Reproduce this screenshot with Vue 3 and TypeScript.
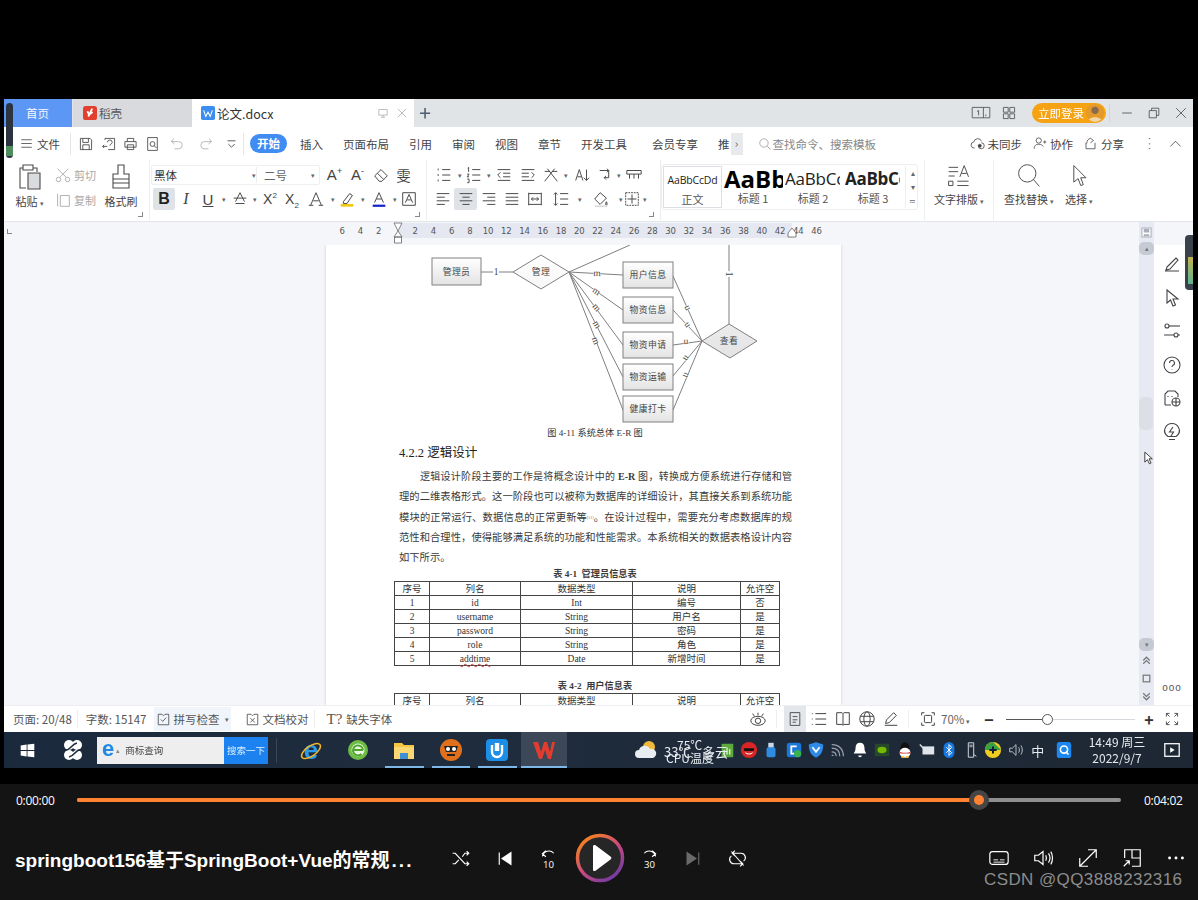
<template>
  <div class="stage">
    <div class="top-gap"></div>

    <div class="window">
      <div class="left-handle"><i></i></div>
      <div class="right-handle"><i></i></div>

      <div class="tabs">
        <div class="tab tab-home">首页</div>
        <div class="tab tab-grey">
          <svg class="tab-logo" viewBox="0 0 16 16"><rect width="16" height="16" rx="3" fill="#e2402f" /><path d="M10.5 3 6 12M5 6l2 4 4-3" fill="none" stroke="#fff" stroke-width="2" /></svg>
          稻壳
        </div>
        <div class="tab tab-doc">
          <svg class="tab-logo" viewBox="0 0 16 16"><rect width="16" height="16" rx="2" fill="#3b8ef0" /><path d="M3 5l2.5 7L8 7l2.500 5L13 5" fill="none" stroke="#fff" stroke-width="1.200" /></svg>
          <span class="tab-name">论文.docx</span>
          <svg class="ic14" viewBox="0 0 20 20" v-html="ic.screen"></svg>
          <svg class="ic14" viewBox="0 0 20 20" v-html="ic.close"></svg>
        </div>
        <div class="tab-plus">+</div>
        <div class="grow"></div>
        <svg class="win-ic wide" viewBox="0 0 24 20" v-html="ic.book1"></svg>
        <svg class="win-ic" viewBox="0 0 20 20" v-html="ic.grid"></svg>
        <div class="login">立即登录<span class="avatar"><svg viewBox="0 0 20 20"><circle cx="10" cy="7" r="4" fill="#8a6a4c" /><path d="M2 20c1-7 15-7 16 0z" fill="#f3d6a8" /></svg></span></div>
        <span class="tsep"></span>
        <svg class="win-ic" viewBox="0 0 20 20" v-html="ic.min"></svg>
        <svg class="win-ic" viewBox="0 0 20 20" v-html="ic.restore"></svg>
        <svg class="win-ic last" viewBox="0 0 20 20" v-html="ic.close"></svg>
      </div>

      <div class="menubar">
        <svg class="ic15 menu-ic" viewBox="0 0 20 20" v-html="ic.menu"></svg>
        <span class="file">文件</span>
        <span class="vsep"></span>
        <div class="quick">
          <svg v-for="q in quick" :key="q.n" class="ic17" :class="{ faint: q.faint }" viewBox="0 0 20 20" :style="{ width: q.w + 'px' }" v-html="ic[q.n]"></svg>
        </div>
        <span class="vsep tight"></span>
        <div class="pill">开始</div>
        <div class="menu-items">
          <span v-for="m in menus" :key="m">{{ m }}</span>
        </div>
        <div class="more-tab">›</div>
        <div class="search">
          <svg class="ic14" viewBox="0 0 20 20" v-html="ic.search"></svg>
          查找命令、搜索模板
        </div>
        <div class="grow"></div>
        <div class="menu-right">
          <span><svg class="ic15" viewBox="0 0 20 20" v-html="ic.cloud"></svg>未同步</span>
          <span><svg class="ic15" viewBox="0 0 20 20" v-html="ic.user"></svg>协作</span>
          <span><svg class="ic15" viewBox="0 0 20 20" v-html="ic.share"></svg>分享</span>
          <svg class="ic15 kebab" viewBox="0 0 20 20" v-html="ic.kebab"></svg>
          <svg class="ic15 chev" viewBox="0 0 20 20" v-html="ic.up"></svg>
        </div>
      </div>

      <div class="ribbon">
        <div class="group g-clip">
          <div class="big paste">
            <svg class="ic30" viewBox="0 0 30 30" v-html="ic.paste"></svg>
            <span>粘贴<em>▾</em></span>
          </div>
          <div class="small-col">
            <div class="faint-row"><svg class="ic17 faint" viewBox="0 0 20 20" v-html="ic.cut"></svg>剪切</div>
            <div class="faint-row"><svg class="ic17 faint" viewBox="0 0 20 20" v-html="ic.copy"></svg>复制</div>
          </div>
          <div class="big brush">
            <svg class="ic30" viewBox="0 0 30 30" v-html="ic.brush"></svg>
            <span>格式刷</span>
          </div>
          <span class="corner"></span>
        </div>

        <div class="group g-font">
          <div class="tool-row">
            <div class="font-box">
              <span class="fname">黑体</span><em>▾</em>
              <span class="fsize">二号</span><em>▾</em>
            </div>
            <template v-for="(c, i) in fontTop" :key="i">
              <div class="cell" :style="{ width: c.w + 'px' }">
                <svg v-if="c.n" class="ic17" viewBox="0 0 20 20" v-html="ic[c.n]"></svg>
                <span v-else :class="c.cls">{{ c.t }}<sup v-if="c.s">{{ c.s }}</sup></span>
              </div>
            </template>
          </div>
          <div class="tool-row second">
            <div v-for="(c, i) in fontBottom" :key="i" class="cell" :class="{ on: c.on }" :style="{ width: c.w + 'px' }">
              <svg v-if="c.n" class="ic17" viewBox="0 0 20 20" v-html="ic[c.n]"></svg>
              <span v-else :class="c.cls">{{ c.t }}<sup v-if="c.s">{{ c.s }}</sup><sub v-if="c.b">{{ c.b }}</sub></span>
            </div>
          </div>
          <span class="corner"></span>
        </div>

        <div class="group g-para">
          <div class="tool-row">
            <div v-for="(c, i) in paraTop" :key="i" class="cell" :style="{ width: c.w + 'px' }">
              <svg v-if="c.n" class="ic17" viewBox="0 0 20 20" v-html="ic[c.n]"></svg>
              <span v-else class="dd">▾</span>
            </div>
          </div>
          <div class="tool-row second">
            <div v-for="(c, i) in paraBottom" :key="i" class="cell" :class="{ on: c.on }" :style="{ width: c.w + 'px' }">
              <svg v-if="c.n" class="ic17" viewBox="0 0 20 20" v-html="ic[c.n]"></svg>
              <span v-else class="dd">▾</span>
            </div>
          </div>
          <span class="corner"></span>
        </div>

        <div class="styles">
          <div v-for="s in styles" :key="s.label" class="style-card" :class="{ lead: s.lead }">
            <div class="sample" :class="s.cls">{{ s.text }}</div>
            <div class="slabel">{{ s.label }}</div>
          </div>
          <div class="style-scroll">
            <span>▴</span><span>▾</span><span>≂</span>
          </div>
        </div>

        <div class="big-tool t-layout">
          <svg class="ic26" viewBox="0 0 30 30" v-html="ic.textlayout"></svg>
          <span>文字排版<em>▾</em></span>
        </div>
        <div class="big-tool t-find">
          <svg class="ic26" viewBox="0 0 30 30" v-html="ic.find"></svg>
          <span>查找替换<em>▾</em></span>
        </div>
        <div class="big-tool t-select">
          <svg class="ic26" viewBox="0 0 30 30" v-html="ic.select"></svg>
          <span>选择<em>▾</em></span>
        </div>
      </div>

      <div class="ruler">
        <span class="ruler-corner"></span>
        <div class="ruler-track">
          <span v-for="(n, i) in rulerNums" :key="i" class="tick">{{ n }}</span>
          <svg class="hourglass" viewBox="0 0 10 22"><path d="M1 1h8L5 9zM5 9l4 6H1zM1.500 15h7v6h-7z" fill="#fff" stroke="#666" stroke-width=".8" /></svg>
          <svg class="marker" viewBox="0 0 10 12"><path d="M5 1l4 5v4H1V6z" fill="#fff" stroke="#666" stroke-width=".8" /></svg>
        </div>
      </div>

      <div class="workspace">
        <div class="doc">
          <div class="page">
            <svg class="er" viewBox="0 0 515 192">
              <defs>
                <linearGradient id="boxFill" x1="0" y1="0" x2="0" y2="1">
                  <stop offset="0" stop-color="#fff" />
                  <stop offset="1" stop-color="#e3e3e3" />
                </linearGradient>
              </defs>
              <g stroke="#7f7f7f" stroke-width="1" fill="none">
                <path d="M155 27h32M243 27l61-27M403 0v79" />
                <path v-for="(l, i) in erLeft" :key="'l' + i" :d="`M243 27L297 ${l.y}`" />
                <path v-for="(l, i) in erLeft" :key="'r' + i" :d="`M347 ${l.ry}L376 96`" />
              </g>
              <g stroke="none" fill="#fff">
                <circle v-for="(l, i) in erLeft" :key="'cm' + i" :cx="l.mx" :cy="l.my - 2" r="3.500" />
                <circle v-for="(l, i) in erLeft" :key="'cu' + i" :cx="l.ux" :cy="l.uy - 2" r="2.500" />
                <circle cx="170" cy="27" r="3" />
                <circle cx="403" cy="29" r="3" />
              </g>
              <g class="er-label">
                <text v-for="(l, i) in erLeft" :key="'m' + i" :x="l.mx" :y="l.my" text-anchor="middle" :transform="`rotate(${l.ma} ${l.mx} ${l.my - 2})`">m</text>
                <text v-for="(l, i) in erLeft" :key="'u' + i" :x="l.ux" :y="l.uy" text-anchor="middle" :transform="`rotate(${l.ua} ${l.ux} ${l.uy - 2})`">u</text>
                <text x="170" y="30" text-anchor="middle">1</text>
                <text x="403" y="32" text-anchor="middle" transform="rotate(90 403 29)">1</text>
              </g>
              <g fill="url(#boxFill)" stroke="#808080" stroke-width="1">
                <rect x="106" y="13" width="49" height="27" />
                <rect v-for="b in erBoxes" :key="b.t" x="297" :y="b.y" width="50" height="26" />
                <path d="M187 27l28-17 28 17-28 17zM376 96l27-17 28 17-27 17z" />
              </g>
              <g class="er-text">
                <text x="130.500" y="30" text-anchor="middle">管理员</text>
                <text x="215" y="30" text-anchor="middle">管理</text>
                <text v-for="b in erBoxes" :key="b.t" x="322" :y="b.y + 16" text-anchor="middle">{{ b.t }}</text>
                <text x="403" y="99" text-anchor="middle">查看</text>
              </g>
            </svg>
            <div class="cap fig">图 4-11 系统总体 E-R 图</div>
            <h3 class="h-sec">4.2.2 逻辑设计</h3>
            <div class="para">
              <div class="ln indent">逻辑设计阶段主要的工作是将概念设计中的 <b>E-R</b> 图，转换成方便系统进行存储和管</div>
              <div class="ln">理的二维表格形式。这一阶段也可以被称为数据库的详细设计，其直接关系到系统功能</div>
              <div class="ln">模块的正常运行、数据信息的正常更新等<span class="ref">[11]</span>。在设计过程中，需要充分考虑数据库的规</div>
              <div class="ln">范性和合理性，使得能够满足系统的功能和性能需求。本系统相关的数据表格设计内容</div>
              <div class="ln last">如下所示。</div>
            </div>
            <div class="cap tcap">表 4-1&nbsp; 管理员信息表</div>
            <table class="tbl">
              <colgroup><col class="c1" /><col class="c2" /><col class="c3" /><col class="c4" /><col class="c5" /></colgroup>
              <tr><td v-for="h in tableHead" :key="h">{{ h }}</td></tr>
              <tr v-for="r in tableRows" :key="r[0]">
                <td v-for="(v, i) in r" :key="i"><span :class="{ wavy: v === 'addtime' }">{{ v }}</span></td>
              </tr>
            </table>
            <div class="cap tcap second-cap">表 4-2&nbsp; 用户信息表</div>
            <table class="tbl">
              <colgroup><col class="c1" /><col class="c2" /><col class="c3" /><col class="c4" /><col class="c5" /></colgroup>
              <tr><td v-for="h in tableHead" :key="h">{{ h }}</td></tr>
            </table>
          </div>
        </div>

        <div class="vscroll">
          <svg class="sb-top" viewBox="0 0 12 12"><path d="M1 1h10v10H1z" fill="#fff" stroke="#a9aeb8" /><path d="M3 2h6v4H3zM3 8h6v2H3z" fill="#a9aeb8" stroke="none" /></svg>
          <div class="sb-btn">▴</div>
          <div class="sb-rail"><div class="sb-thumb"></div></div>
          <div class="sb-btn">▾</div>
          <div class="sb-foot">
            <svg viewBox="0 0 10 10"><path d="M2 5l3-3 3 3M2 8l3-3 3 3" fill="none" stroke="#777" /></svg>
            <svg viewBox="0 0 10 10"><rect x="2" y="2" width="6" height="6" fill="none" stroke="#777" /></svg>
            <svg viewBox="0 0 10 10"><path d="M2 2l3 3 3-3M2 5l3 3 3-3" fill="none" stroke="#777" /></svg>
          </div>
          <svg class="mouse" viewBox="0 0 12 16"><path d="M1 1v12l3-3 2.500 5 2-1-2.500-5h4z" fill="#fff" stroke="#222" stroke-width="1" /></svg>
        </div>

        <div class="side">
          <div class="side-grip"></div>
          <svg v-for="n in sideIcons" :key="n" class="side-ic" viewBox="0 0 20 20" v-html="ic[n]"></svg>
          <div class="grow"></div>
          <div class="side-dots">ooo</div>
        </div>
      </div>

      <div class="status">
        <span class="st-text page-no">页面: 20/48</span>
        <span class="st-sep"></span>
        <span class="st-text words">字数: 15147</span>
        <span class="st-btn spell"><svg class="ic15" viewBox="0 0 20 20" v-html="ic.spell"></svg>拼写检查<em>▾</em></span>
        <span class="st-btn proof"><svg class="ic15" viewBox="0 0 20 20" v-html="ic.proof"></svg>文档校对</span>
        <span class="st-sep"></span>
        <span class="st-btn missing"><b>T?</b>缺失字体</span>
        <div class="grow"></div>
        <svg class="st-ic eye" viewBox="0 0 20 20" v-html="ic.eye"></svg>
        <span class="st-sep"></span>
        <div class="view-on"><svg class="st-ic" viewBox="0 0 20 20" v-html="ic.page"></svg></div>
        <svg class="st-ic" viewBox="0 0 20 20" v-html="ic.outline"></svg>
        <svg class="st-ic" viewBox="0 0 20 20" v-html="ic.bookv"></svg>
        <svg class="st-ic" viewBox="0 0 20 20" v-html="ic.globe"></svg>
        <svg class="st-ic" viewBox="0 0 20 20" v-html="ic.pen"></svg>
        <span class="st-sep"></span>
        <svg class="st-ic" viewBox="0 0 20 20" v-html="ic.focus"></svg>
        <span class="zoom-val">70%<em>▾</em></span>
        <span class="zoom-btn">−</span>
        <div class="slider"><i></i><b></b></div>
        <span class="zoom-btn plus">+</span>
        <svg class="st-ic full" viewBox="0 0 20 20" v-html="ic.full"></svg>
      </div>
    </div>

    <div class="taskbar">
      <div class="tb-cell win"><svg viewBox="0 0 20 20"><path d="M2 4l7-1v6.500H2zM10 3l8-1v7.500h-8zM2 10.500h7V17l-7-1zM10 10.500h8V18l-8-1z" fill="#fff" /></svg></div>
      <div class="tb-cell win"><svg viewBox="0 0 24 24"><g fill="#fff"><circle cx="8" cy="7" r="5" /><circle cx="16" cy="7" r="5" /><circle cx="8" cy="17" r="5" /><circle cx="16" cy="17" r="5" /></g><path d="M3 12c6 2 7-6 13-7M21 12c-6-2-7 6-13 7" stroke="#1d2a3a" stroke-width="1.500" fill="none" /></svg></div>
      <div class="tb-search">
        <div class="tb-input"><span class="ie">e</span><em>▴</em>商标查询</div>
        <div class="tb-go">搜索一下</div>
      </div>
      <span class="tb-sep"></span>
      <div v-for="(a, i) in taskApps" :key="a.id" class="tb-app" :class="{ active: i === 5, run: i > 1 }">
        <svg viewBox="0 0 24 24" v-html="a.svg"></svg>
      </div>
      <div class="weather">
        <svg class="cloud" viewBox="0 0 24 20"><circle cx="15" cy="7" r="6" fill="#f0b93a" /><path d="M5 18a4 4 0 0 1 0-8 6 6 0 0 1 11-1 4.500 4.500 0 0 1 3 9z" fill="#e8edf2" /></svg>
        <span class="w1">33℃</span>
        <span class="w2">多云</span>
        <span class="w3">75℃</span>
        <span class="w4">CPU温度</span>
      </div>
      <div v-for="t in tray" :key="t.id" class="tray-cell" :class="{ q: t.id === 'p' }">
        <svg v-if="t.svg" viewBox="0 0 20 20" v-html="t.svg"></svg>
        <span v-else>{{ t.text }}</span>
      </div>
      <div class="clock">
        <div>14:49 周三</div>
        <div>2022/9/7</div>
      </div>
      <div class="action"><svg viewBox="0 0 20 20"><rect x="2" y="3" width="16" height="14" fill="none" stroke="#fff" stroke-width="1.400" /><path d="M8 7l5 3-5 3z" fill="#fff" /></svg></div>
    </div>

    <div class="black-gap"></div>

    <div class="player">
      <div class="progress-row">
        <span class="time t-start">0:00:00</span>
        <div class="track">
          <div class="done" :style="{ width: progress + '%' }"></div>
          <div class="knob"><i></i></div>
        </div>
        <span class="time t-end">0:04:02</span>
      </div>
      <div class="control-row">
        <div class="title">springboot156基于SpringBoot+Vue的常规<span class="dots">...</span></div>
        <div class="controls">
          <svg class="pc shuffle" viewBox="0 0 24 24"><path d="M3 6h3l11 12h4M3 18h3l4-4.500M14 10l3-4h4M19 3.500 21.500 6 19 8.500M19 15.500l2.500 2.500-2.500 2.500" /></svg>
          <svg class="pc prev" viewBox="0 0 24 24"><path d="M6 5v14" /><path d="M20 4v16L8 12z" class="solid" /></svg>
          <svg class="pc rew" viewBox="0 0 24 24"><path d="M5 9.500A7.500 7.500 0 0 1 18 6M9 3 5 6.500 9 10" /><text x="12" y="23" text-anchor="middle">10</text></svg>
          <svg class="play" viewBox="0 0 52 52">
            <defs>
              <linearGradient id="ring" x1=".1" y1=".1" x2=".8" y2="1">
                <stop offset="0" stop-color="#f6821f" />
                <stop offset=".5" stop-color="#cb4a7e" />
                <stop offset="1" stop-color="#6f3aa6" />
              </linearGradient>
            </defs>
            <circle cx="26" cy="26" r="22.500" fill="#262626" stroke="url(#ring)" stroke-width="3.500" />
            <path d="M19 14.500c0-1.500 1.200-2 2.500-1.300l15 11.300c1.200.9 1.200 2.100 0 3l-15 11.300c-1.300.7-2.500.2-2.500-1.300z" fill="#fff" />
          </svg>
          <svg class="pc fwd" viewBox="0 0 24 24"><path d="M19 9.500A7.500 7.500 0 0 0 6 6M15 3l4 3.500L15 10" /><text x="12" y="23" text-anchor="middle">30</text></svg>
          <svg class="pc next" viewBox="0 0 24 24"><path d="M4 4v16l12-8z" class="solid dim" /><path d="M18 5v14" class="dimline" /></svg>
          <svg class="pc repeat" viewBox="0 0 24 24"><path d="M7 6h9a5 5 0 0 1 3 9M17 18H8a5 5 0 0 1-3-9M9 3 6 6l3 3M15 21l3-3-3-3M5 4l14 16" /></svg>
        </div>
        <div class="controls-right">
          <svg class="pc" viewBox="0 0 24 24"><rect x="2" y="5" width="20" height="14" rx="3" /><path d="M6 14h5M13 14h5M6 16.500h12" stroke-width="1" /></svg>
          <svg class="pc" viewBox="0 0 24 24"><path d="M3 9h4l5-4v14l-5-4H3zM15 9c1 2 1 4 0 6M18 7c2 3 2 7 0 10M20.500 5c2.500 4 2.500 10 0 14" /></svg>
          <svg class="pc" viewBox="0 0 24 24"><path d="M3 21 21 3M12 3h9v9M3 12v9h9" /></svg>
          <svg class="pc" viewBox="0 0 24 24"><path d="M4 12V3h17v18h-9M12 3v9h9M3 21l6-6M5 15h4v4" /></svg>
          <svg class="pc" viewBox="0 0 24 24"><g class="solid"><circle cx="5" cy="12" r="1.600" /><circle cx="12" cy="12" r="1.600" /><circle cx="19" cy="12" r="1.600" /></g></svg>
        </div>
      </div>
      <div class="watermark">CSDN @QQ3888232316</div>
    </div>
  </div>
</template>

<script setup lang="ts">
interface Cell {
  w: number
  n?: string
  t?: string
  s?: string
  b?: string
  cls?: string
  on?: boolean
}

const progress = 86.3

const ic: Record<string, string> = {
  menu: '<path d="M3 5h14M3 10h14M3 15h14"/>',
  close: '<path d="M4 4l12 12M16 4 4 16"/>',
  screen: '<path d="M4 5h12v8H4zM10 13v3M7 16h6"/>',
  book1: '<path d="M1 3h22v13H1zM15 3v13M18 12v2M9 7v6M7 8l2-1"/>',
  grid: '<path d="M3 3h6v6H3zM11 3h6v6h-6zM3 11h6v6H3zM11 11h6v6h-6z"/>',
  min: '<path d="M4 10h12"/>',
  restore: '<path d="M4 7h9v9H4zM7 7V4h9v9h-3"/>',
  save: '<path d="M3 3h12l2 2v12H3zM6 3v5h7V3M6 17v-6h8v6"/>',
  saveas: '<path d="M5 5V3h12v14H9M8 8a3 3 0 0 1 6 0c0 2-3 2-3 4M4 11l-2 2 2 2M2 13h6"/>',
  print: '<path d="M6 7V3h8v4M3 7h14v7H3zM6 11h8v6H6z"/>',
  preview: '<path d="M4 2h12v16H4z"/><circle cx="10" cy="10" r="3"/><path d="M12 12l3 3"/>',
  undo: '<path d="M6 3 3 7l4 3M3 7h9a4.500 4.500 0 0 1 0 9H7"/>',
  redo: '<path d="M14 3l3 4-4 3M17 7H8a4.500 4.500 0 0 0 0 9h5"/>',
  ddown: '<path d="M5 6h10M6 10l4 4 4-4"/>',
  search: '<circle cx="8.500" cy="8.500" r="6"/><path d="M13 13l5 5"/>',
  cloud: '<path d="M6 16a4 4 0 0 1-1-8 5.500 5.500 0 0 1 10.500-1M15 9a4 4 0 1 1-4 4"/><circle cx="13" cy="13" r="2" fill="#444"/>',
  user: '<circle cx="9" cy="6" r="3.500"/><path d="M3 17c0-5 3-6 6-6s5 1 6 3M15 8h4M17 6v4"/>',
  share: '<path d="M4 9v8h12V9M10 3c-3 1-5 3-5 7M10 3l4 3-4 3"/>',
  kebab: '<path d="M10 3v1M10 10v1M10 16v1" stroke-width="2"/>',
  up: '<path d="M3 14l7-7 7 7"/>',
  paste: '<path d="M8 6H5v20h6M8 3h10v5H8zM18 6h4v4"/><path d="M13 11h12v16H13z" fill="#d9dbdf"/>',
  cut: '<circle cx="5" cy="15" r="2.500"/><circle cx="15" cy="15" r="2.500"/><path d="M6 13 16 3M14 13 4 3"/>',
  copy: '<path d="M7 5h10v12H7zM4 3v14" />',
  brush: '<path d="M12 3h6v9h5v5H7v-5h5zM7 17v9h16v-9M7 21h16"/>',
  eraser: '<path d="M3 11l7-7 7 7-6 6H8z"/><path d="M6 8l7 7"/>',
  hilite: '<path d="M6 13l7-9 3 2-6 9H6z"/><path d="M3 17h14" stroke="#f2c811" stroke-width="3"/>',
  acolor: '<path d="M5 14 10 3l5 11M7 10h6"/><path d="M3 17.500h14" stroke="#1726c8" stroke-width="2.500"/>',
  underA: '<path d="M5 13 10 3l5 10M3 9h14M5 15h10"/>',
  effect: '<path d="M4 17 10 3l6 14M7 12h6M2 17h5M13 17h5"/>',
  boxa: '<path d="M3 3h14v14H3zM6 14l4-9 4 9M8 11h4"/>',
  bullets: '<path d="M8 4h9M8 10h9M8 16h9"/><path d="M3 4h1M3 10h1M3 16h1" stroke-width="2.200"/>',
  numbers: '<path d="M8 4h9M8 10h9M8 16h9M3 2.500l1-1v5M2.500 9h2l-2 3h2M2.500 14.500h2v4h-2"/>',
  outdent: '<path d="M3 4h14M9 8h8M9 12h8M3 16h14M6 7l-3 3 3 3"/>',
  indent: '<path d="M3 4h14M3 8h8M3 12h8M3 16h14M14 7l3 3-3 3"/>',
  tools: '<path d="M3 17 14 3M17 17 6 3M3 6h6M11 6h6"/>',
  sortaz: '<path d="M3 16 7 4l4 12M5 12h4M15 4v12M12 13l3 3 3-3"/>',
  swap: '<path d="M3 5h10v8H8M11 3l2 2-2 2M10 11l-2 2 2 2"/>',
  rulerx: '<path d="M2 5h16v4H2zM5 9v5M10 9v5M15 9v5"/>',
  left: '<path d="M3 4h14M3 8h9M3 12h14M3 16h9"/>',
  center: '<path d="M3 4h14M6 8h8M3 12h14M6 16h8"/>',
  right: '<path d="M3 4h14M8 8h9M3 12h14M8 16h9"/>',
  just: '<path d="M3 4h14M3 8h14M3 12h14M3 16h14"/>',
  dist: '<path d="M3 3v14M17 3v14M3 4h14M3 16h14M6 10h8M8 8l-2 2 2 2M12 8l2 2-2 2"/>',
  spacing: '<path d="M9 4h9M9 10h9M9 16h9M4 3v14M2 5l2-2 2 2M2 15l2 2 2-2"/>',
  shade: '<path d="M9 3 3 10l6 6 7-7zM16 13c-1 2-1 4 0 4s1-2 0-4"/><path d="M3 18h14" stroke="#ddd" stroke-width="2"/>',
  table: '<path d="M3 3h14v14H3z" stroke-dasharray="2 1"/><path d="M10 5v10M5 10h10"/>',
  textlayout: '<path d="M3 5h11M3 10h11M3 15h7M16 16 21 3l5 13M18 12h6M3 21h5v5H3zM13 21h13M13 26h13"/>',
  find: '<circle cx="13" cy="12" r="10"/><path d="M20 19l7 8"/>',
  select: '<path d="M9 3v19l5-4 3 8 3-1-3-8h6z"/>',
  pen2: '<path d="M3 17h14M5 13 14 4l2 2-8 9-4 1z"/>',
  pointer: '<path d="M5 2v13l3.500-3 2.500 6 2.500-1-2.500-6H16z"/>',
  sliders: '<circle cx="5" cy="5" r="2"/><path d="M7 5h11"/><circle cx="14" cy="14" r="2"/><path d="M2 14h10M16 14h2"/>',
  help: '<circle cx="10" cy="10" r="8"/><path d="M7.500 8a2.500 2.500 0 1 1 3.500 2.300c-.8.400-1 1-1 1.700M10 14.500v.5"/>',
  skin: '<path d="M3 17V6l3-3h7l3 3v3M3 17h6"/><path d="M6 8v1M10 8v1"/><circle cx="14" cy="14" r="4"/><path d="M10 14h8M14 10v8"/>',
  bulb: '<path d="M7 17.500h6M6 14.500c-7-5-2-13 4-13s11 8 4 13z"/><path d="M11 5 7.500 10h4L9 14"/>',
  spell: '<path d="M3 3h5l2 2 2-2h5v14H3zM6.500 10l2.500 2.500 4.500-5"/>',
  proof: '<path d="M3 3h5l2 2 2-2h5v14H3zM7 8l6 6M13 8l-6 6"/>',
  eye: '<ellipse cx="10" cy="12" rx="8" ry="5"/><circle cx="10" cy="12" r="3"/><path d="M10 3v3M4 4l2 3M16 4l-2 3"/>',
  page: '<path d="M4 2h12v16H4zM7 7h6M7 11h6M7 14h4"/>',
  outline: '<path d="M6 4h12M6 10h12M6 16h12M2 4h1M2 10h1M2 16h1"/>',
  bookv: '<path d="M3 3h6l1 1 1-1h6v13h-6l-1 1-1-1H3zM10 4v13"/>',
  globe: '<circle cx="10" cy="10" r="8"/><ellipse cx="10" cy="10" rx="3.500" ry="8"/><path d="M2.500 7h15M2.500 13h15"/>',
  pen: '<path d="M3 17h14M4 15l1-4 8-8 3 3-8 8z"/>',
  focus: '<path d="M3 6V3h3M14 3h3v3M3 14v3h3M14 17h3v-3"/><rect x="6" y="6" width="8" height="8" rx="1"/>',
  full: '<path d="M3 3l4 4M3 7V3h4M17 3l-4 4M17 7V3h-4M3 17l4-4M3 13v4h4M17 17l-4-4M17 13v4h-4"/>',
}

const quick = [
  { n: 'save', w: 24 },
  { n: 'saveas', w: 22 },
  { n: 'print', w: 21 },
  { n: 'preview', w: 23 },
  { n: 'undo', w: 26, faint: true },
  { n: 'redo', w: 32, faint: true },
  { n: 'ddown', w: 19 },
]
const menus = ['插入', '页面布局', '引用', '审阅', '视图', '章节', '开发工具', '会员专享', '推']

const fontTop: Cell[] = [
  { t: 'A', s: '+', cls: 'fa', w: 23 },
  { t: 'A', s: '-', cls: 'fa', w: 23 },
  { n: 'eraser', w: 23 },
  { t: '雯', cls: 'fw', w: 23 },
]
const fontBottom: Cell[] = [
  { t: 'B', cls: 'fb', w: 22, on: true },
  { t: 'I', cls: 'fi', w: 22 },
  { t: 'U', cls: 'fu', w: 22 },
  { t: '▾', cls: 'dd', w: 10 },
  { n: 'underA', w: 22 },
  { t: '▾', cls: 'dd', w: 8 },
  { t: 'X', s: '2', cls: 'fx', w: 22 },
  { t: 'X', b: '2', cls: 'fx', w: 22 },
  { n: 'effect', w: 26 },
  { t: '▾', cls: 'dd', w: 7 },
  { n: 'hilite', w: 22 },
  { t: '▾', cls: 'dd', w: 9 },
  { n: 'acolor', w: 24 },
  { t: '▾', cls: 'dd', w: 8 },
  { n: 'boxa', w: 20 },
]
const paraTop: Cell[] = [
  { n: 'bullets', w: 24 }, { w: 7 },
  { n: 'numbers', w: 22 }, { w: 7 },
  { n: 'outdent', w: 24 },
  { n: 'indent', w: 23 },
  { n: 'tools', w: 24 }, { w: 5 },
  { n: 'sortaz', w: 28 },
  { n: 'swap', w: 20 }, { w: 6 },
  { n: 'rulerx', w: 24 },
]
const paraBottom: Cell[] = [
  { n: 'left', w: 22 },
  { n: 'center', w: 23, on: true },
  { n: 'right', w: 24 },
  { n: 'just', w: 22 },
  { n: 'dist', w: 23 },
  { n: 'spacing', w: 30 }, { w: 8 },
  { n: 'shade', w: 34 }, { w: 5 },
  { n: 'table', w: 18 }, { w: 7 },
]

const styles = [
  { text: 'AaBbCcDd', label: '正文', cls: 's-normal', lead: true },
  { text: 'AaBb', label: '标题 1', cls: 's-h1' },
  { text: 'AaBbCc', label: '标题 2', cls: 's-h2' },
  { text: 'AaBbCc', label: '标题 3', cls: 's-h3' },
]

const rulerNums = ['6', '4', '2', '', '2', '4', '6', '8', '10', '12', '14', '16', '18', '20', '22', '24', '26', '28', '30', '32', '34', '36', '38', '40', '42', '44', '46']

const erBoxes = [
  { t: '用户信息', y: 17 },
  { t: '物资信息', y: 52 },
  { t: '物资申请', y: 87 },
  { t: '物资运输', y: 119 },
  { t: '健康打卡', y: 151 },
]
const erLeft = [
  { y: 30, ry: 31, mx: 271, my: 31, ma: 1, ux: 361, uy: 65, ua: 65 },
  { y: 65, ry: 65, mx: 270, my: 49, ma: 35, ux: 361, uy: 82, ua: 55 },
  { y: 100, ry: 100, mx: 270, my: 65, ma: 50, ux: 360, uy: 99, ua: 1 },
  { y: 132, ry: 131, mx: 270, my: 82, ma: 60, ux: 360, uy: 115, ua: -55 },
  { y: 165, ry: 165, mx: 269, my: 98, ma: 70, ux: 360, uy: 132, ua: -65 },
]

const tableHead = ['序号', '列名', '数据类型', '说明', '允许空']
const tableRows = [
  ['1', 'id', 'Int', '编号', '否'],
  ['2', 'username', 'String', '用户名', '是'],
  ['3', 'password', 'String', '密码', '是'],
  ['4', 'role', 'String', '角色', '是'],
  ['5', 'addtime', 'Date', '新增时间', '是'],
]

const sideIcons = ['pen2', 'pointer', 'sliders', 'help', 'skin', 'bulb']

const taskApps = [
  { id: 'ie', svg: '<text x="12" y="21" text-anchor="middle" font-family="Liberation Sans" font-size="26" font-weight="700" fill="#2d9be8">e</text><ellipse cx="12" cy="13" rx="11" ry="5" fill="none" stroke="#f3b626" stroke-width="1.500" transform="rotate(-35 12 13)"/>' },
  { id: 'ie2', svg: '<circle cx="12" cy="12" r="10" fill="#6dbd45"/><circle cx="12" cy="12" r="6.500" fill="#eaf6e2"/><path d="M7 12h10M17 12a5 5 0 1 0-1.500 4" fill="none" stroke="#4ea62c" stroke-width="2"/>' },
  { id: 'folder', svg: '<path d="M2 5h8l2 2h10v14H2z" fill="#f6c544"/><path d="M2 9h20v12H2z" fill="#fbd772"/><path d="M8 15h8v6H8z" fill="#3f8fd6"/>' },
  { id: 'cat', svg: '<circle cx="12" cy="12" r="11" fill="#e0701c"/><path d="M5 8h14l-2 6H7z" fill="#222"/><circle cx="9" cy="11" r="2" fill="#fff"/><circle cx="15" cy="11" r="2" fill="#fff"/><path d="M8 17h8" stroke="#222" stroke-width="2"/>' },
  { id: 'u', svg: '<rect x="1" y="1" width="22" height="22" rx="4" fill="#1d8ee6"/><path d="M7 7v7a5 5 0 0 0 10 0V7M11 5v8M13 5v8" fill="none" stroke="#fff" stroke-width="2.400"/>' },
  { id: 'wps', svg: '<path d="M1 4h5l3 10 3-10h3l3 10 2-10h3l-4 17h-3l-3-9-3 9H7z" fill="#e33b2e"/>' },
]

const tray = [
  { id: 'a', svg: '<rect x="4" y="3" width="13" height="15" rx="1" fill="#5ea93e"/><path d="M7 15v-5M10 15V7M13 15V9" stroke="#d7f0c8" stroke-width="1.500"/>' },
  { id: 'b', svg: '<circle cx="10" cy="10" r="9" fill="#d92525"/><path d="M4 8h12l-1 3H5z" fill="#111"/><path d="M6 13c2 2 6 2 8 0" stroke="#fff" fill="none"/>' },
  { id: 'c', svg: '<rect x="7" y="2" width="6" height="6" fill="#c8d8ea"/><rect x="5" y="7" width="10" height="11" rx="2" fill="#2e8be0"/>' },
  { id: 'd', svg: '<rect x="2" y="2" width="16" height="16" rx="3" fill="#1c78d8"/><path d="M13 6H7v8h5" stroke="#fff" stroke-width="2" fill="none"/><circle cx="14" cy="14" r="4" fill="#37b24d"/>' },
  { id: 'e', svg: '<path d="M10 1.500 18 4c0 7-2 12-8 14.500C4 16 2 11 2 4z" fill="#2f8be6"/><path d="M6 7l4 5 4-5" stroke="#fff" stroke-width="2" fill="none"/>' },
  { id: 'f', svg: '<path d="M3 16l2 0M3 12c3 0 5 2 5 5M3 8c6 0 9 3 9 9M3 4c8 0 13 5 13 13" stroke="#9aa3ad" fill="none" stroke-width="1.300"/>' },
  { id: 'g', svg: '<path d="M10 2c-3 0-5 2-5 6 0 4-2 5-2 6h14c0-1-2-2-2-6 0-4-2-6-5-6zM8 16a2 2 0 0 0 4 0z" fill="#fff"/>' },
  { id: 'h', svg: '<rect x="2" y="3" width="16" height="14" rx="1" fill="#27492b"/><ellipse cx="10" cy="10" rx="5" ry="3.500" fill="#76b900"/>' },
  { id: 'i', svg: '<ellipse cx="10" cy="8" rx="5" ry="6.500" fill="#111"/><ellipse cx="10" cy="13" rx="6" ry="5.500" fill="#fff"/><path d="M4 12c2 1.500 10 1.500 12 0v2H4z" fill="#d62b2b"/><path d="M6 18h3M11 18h3" stroke="#f3b626" stroke-width="2"/>' },
  { id: 'j', svg: '<rect x="5" y="6" width="13" height="9" fill="#dfe5ea"/><path d="M2 4l4 4" stroke="#dfe5ea" stroke-width="1.500"/>' },
  { id: 'k', svg: '<rect x="4" y="1" width="12" height="18" rx="6" fill="#1677e0"/><path d="M7 7l6 6-3 3V4l3 3-6 6" stroke="#fff" fill="none" stroke-width="1.100"/>' },
  { id: 'l', svg: '<path d="M7 2h6v16H7zM9 4v3M11 4v3M13 15l3 2" stroke="#cfd6dd" fill="none"/>' },
  { id: 'm', svg: '<circle cx="10" cy="10" r="9" fill="#f1cd1f"/><path d="M10 1a9 9 0 0 0-9 9h18" fill="#3aa043"/><path d="M6 10h8M10 6v8" stroke="#123" stroke-width="2.200"/>' },
  { id: 'n', svg: '<path d="M3 8h3l4-4v12l-4-4H3zM13 7c1 2 1 4 0 6M15.500 5c2 3 2 7 0 10" stroke="#b6bdc4" fill="none"/>' },
  { id: 'o', text: '中' },
  { id: 'p', svg: '<rect x="2" y="1" width="16" height="18" rx="3" fill="#1b87ef"/><circle cx="10" cy="9.500" r="4" fill="none" stroke="#fff" stroke-width="1.800"/><path d="M12 12l3 3" stroke="#fff" stroke-width="1.800"/>' },
]
</script>

<style>
html, body { margin: 0; background: #000; }
</style>

<style scoped>
.stage {
  width: 1198px;
  height: 900px;
  overflow: hidden;
  background: #000;
  font-family: "Noto Sans CJK SC", "Liberation Sans", sans-serif;
  color: #444;
}
.top-gap { height: 99px; }
.black-gap { height: 16px; }
.grow { flex: 1; }
em { font-style: normal; font-size: 7px; color: #666; margin-left: 2px; }
svg { fill: none; stroke: #4a4a4a; stroke-width: 1.100; flex: none; }
.ic14 { width: 14px; height: 14px; }
.ic15 { width: 15px; height: 15px; }
.ic17 { width: 18px; height: 18px; }
.ic26 { width: 26px; height: 26px; }
.ic30 { width: 30px; height: 30px; }
.faint { opacity: .42; }

.window {
  position: relative;
  margin-left: 4px;
  width: 1189px;
  height: 633px;
  background: #fff;
  filter: blur(.35px);
}
.left-handle {
  position: absolute; left: 2px; top: 4px; width: 7px; height: 55px;
  background: #2c3440; border-radius: 4px; z-index: 3; overflow: hidden;
}
.left-handle i { position: absolute; left: 0; right: 0; bottom: 2px; height: 10px; background: #4f8d5c; }
.right-handle {
  position: absolute; right: 0; top: 136px; width: 8px; height: 55px;
  background: #39414b; border-radius: 4px 0 0 4px; z-index: 3; overflow: hidden;
}
.right-handle i {
  position: absolute; left: 3px; right: 0; top: 22px; bottom: 6px;
  background: linear-gradient(#c4b24c, #5cb592);
}

.tabs { display: flex; align-items: stretch; height: 28px; background: #e1e4e7; font-size: 11.500px; }
.tab { display: flex; align-items: center; }
.tab-home { width: 68px; background: #5c97f6; color: #f4f7ff; padding-left: 22px; box-sizing: border-box; margin-right: 1px; }
.tab-grey { width: 119px; background: #d8dadd; box-sizing: border-box; padding-left: 10px; color: #555; }
.tab-doc { width: 222px; background: #fff; box-sizing: border-box; padding-left: 9px; color: #333; }
.tab-logo { width: 14px; height: 14px; stroke: none; margin-right: 2px; }
.tab-name { flex: 1; font-size: 12.500px; }
.tab-doc .ic14 { margin-right: 5px; stroke: #aaa; }
.tab-plus { width: 22px; text-align: center; font-size: 21px; line-height: 27px; color: #4d5c70; }
.win-ic { width: 16px; height: 16px; align-self: center; margin-right: 11px; stroke: #555; }
.win-ic.wide { width: 24px; margin-right: 8px; }
.win-ic.last { margin-right: 4px; }
.login {
  display: flex; align-items: center; align-self: center; margin-left: 4px;
  width: 74px; height: 20px; box-sizing: border-box; padding-left: 6px;
  border-radius: 10px; background: #f5a213; color: #fff; font-size: 11.500px; white-space: nowrap;
}
.avatar { width: 18px; height: 18px; border-radius: 50%; overflow: hidden; margin-left: 2px; background: #e39a2a; }
.avatar svg { display: block; stroke: none; }
.tsep { width: 1px; height: 18px; background: #d2d5d9; align-self: center; margin: 0 9px 0 3px; }

.menubar { display: flex; align-items: center; height: 33px; font-size: 11.500px; color: #444; }
.menu-ic { margin-left: 15px; }
.file { margin-left: 3px; }
.vsep { width: 1px; height: 22px; background: #e6e6e6; margin: 0 0 0 10px; }
.vsep.tight { margin-left: 2px; }
.quick { display: flex; margin-left: 3px; }
.quick svg { height: 16px; }
.pill {
  width: 37px; height: 19px; line-height: 19px; margin-left: 6px; text-align: center;
  border-radius: 10px; background: #3f8cf3; color: #fff; font-weight: 700;
}
.menu-items { display: flex; gap: 20px; margin-left: 13px; white-space: nowrap; }
.menu-items span:nth-child(8) { margin-left: 5px; }
.more-tab { width: 12px; height: 22px; line-height: 20px; text-align: center; background: #e7e9ec; color: #666; margin-left: 1px; }
.search { display: flex; align-items: center; margin-left: 15px; color: #888; gap: 1px; }
.search svg { stroke: #999; }
.menu-right { display: flex; align-items: center; gap: 10px; margin-right: 10px; }
.menu-right span { display: flex; align-items: center; gap: 3px; }
.kebab { margin-left: 8px; }
.chev { margin-left: 1px; }

.ribbon { display: flex; height: 62px; box-sizing: border-box; border-bottom: 1px solid #e3e5e8; }
.group { position: relative; height: 60px; box-sizing: border-box; border-right: 1px solid #eceef0; flex: none; }
.corner {
  position: absolute; right: 6px; bottom: 3px; width: 4px; height: 4px;
  border-right: 1px solid #888; border-bottom: 1px solid #888;
}
.g-clip { display: flex; width: 146px; padding-left: 7px; font-size: 11px; }
.big { display: flex; flex-direction: column; align-items: center; }
.big svg { margin-top: 2px; }
.big span { white-space: nowrap; line-height: 16px; margin-top: 1px; }
.paste { width: 37px; }
.small-col { width: 50px; padding: 2px 0 0 6px; box-sizing: border-box; }
.faint-row { display: flex; align-items: center; color: #a8a8a8; height: 25px; white-space: nowrap; gap: 2px; }
.brush { width: 36px; margin-left: 5px; }
.g-font { width: 277px; padding: 4px 0 0 3px; }
.tool-row { display: flex; align-items: center; height: 21px; }
.tool-row.second { height: 22px; margin-top: 3px; }
.font-box {
  display: flex; align-items: center; width: 169px; height: 20px; box-sizing: border-box; flex: none;
  border: 1px solid #eeeff1; font-size: 11.500px; color: #333; margin: 0 3px 0 -2px; border-radius: 2px;
}
.fname { width: 98px; padding-left: 2px; box-sizing: border-box; }
.fsize { width: 53px; padding-left: 7px; box-sizing: border-box; border-left: 1px solid #eee; color: #666; }
.cell { display: flex; align-items: center; justify-content: center; flex: none; height: 22px; border-radius: 2px; font-size: 14px; color: #444; }
.cell.on { background: #dfe3e8; }
.dd { font-size: 7px; color: #666; }
.fa { font-family: "Liberation Sans", sans-serif; font-size: 15px; }
.fa sup { font-size: 9px; line-height: 0; }
.fw { font-size: 14px; }
.fb { font-family: "Liberation Sans", sans-serif; font-weight: 700; font-size: 16px; color: #222; }
.fi { font-family: "Liberation Serif", serif; font-style: italic; font-size: 16px; }
.fu { font-family: "Liberation Sans", sans-serif; font-size: 15px; text-decoration: underline; }
.fx { font-family: "Liberation Sans", sans-serif; font-size: 14px; }
.fx sup, .fx sub { font-size: 8px; line-height: 0; }
.g-para { width: 234px; padding: 4px 0 0 5px; }
.styles {
  display: flex; width: 257px; height: 46px; margin: 4px 0 0 0; box-sizing: border-box; flex: none;
  border: 1px solid #eceef0; border-radius: 3px; padding: 1px;
}
.style-card { width: 60px; overflow: hidden; text-align: center; box-sizing: border-box; flex: none; }
.style-card.lead { border: 1px solid #dcdfe3; width: 59px; margin-right: 1px; }
.sample { height: 25px; line-height: 26px; white-space: nowrap; color: #222; font-family: "Open Sans", "Liberation Sans", sans-serif; overflow: hidden; }
.s-normal { font-size: 10.500px; letter-spacing: -.2px; }
.s-h1 { font-weight: 700; font-size: 24px; color: #000; text-align: left; padding-left: 1px; }
.s-h2 { font-size: 17px; text-align: left; letter-spacing: -.2px; margin-left: 2px; width: 55px; }
.s-h3 { font-weight: 700; font-size: 17px; text-align: left; letter-spacing: -.3px; margin-left: 2px; width: 55px; }
.slabel { font-size: 11px; color: #555; line-height: 15px; }
.style-scroll {
  display: flex; flex-direction: column; flex: none; width: 13px; margin-left: 2px;
  border-left: 1px solid #eee; font-size: 8px; line-height: 14px; text-align: center; color: #666;
}
.big-tool {
  display: flex; flex-direction: column; align-items: center; box-sizing: border-box; flex: none;
  height: 60px; padding-top: 3px; font-size: 11px; white-space: nowrap; color: #444;
}
.big-tool span { line-height: 16px; margin-top: 2px; }
.t-layout { width: 70px; margin-left: 6px; border-right: 1px solid #eceef0; border-left: 1px solid #eceef0; }
.t-find { width: 60px; margin-left: 5px; }
.t-select { width: 36px; margin-left: 2px; }

.ruler { position: relative; height: 23px; background: #f4f6f9; }
.ruler-corner {
  position: absolute; left: 3px; top: 7px; width: 4px; height: 4px;
  border-left: 1px solid #888; border-bottom: 1px solid #888;
}
.ruler-track {
  position: relative; display: flex; align-items: center; margin-left: 329px; width: 494px; height: 15px; top: 1px;
  background: linear-gradient(90deg, transparent 0 65px, #e5e8f0 65px 459px, transparent 459px);
}
.tick { width: 18.250px; flex: none; text-align: center; font-size: 8.500px; color: #555; font-family: "DejaVu Sans", sans-serif; }
.hourglass { position: absolute; left: 60px; top: -1px; width: 10px; height: 22px; }
.marker { position: absolute; left: 454px; top: 4px; width: 10px; height: 12px; }

.workspace { display: flex; height: 460px; }
.doc { position: relative; width: 1135px; background: #f5f6f9; overflow: hidden; }
.page {
  width: 515px; height: 460px; margin-left: 322px; background: #fff; overflow: hidden;
  box-shadow: 0 0 3px rgba(0, 0, 0, .18);
  font-family: "Liberation Serif", "Noto Sans CJK SC", serif; color: #333;
}
.er { display: block; width: 515px; height: 192px; margin-bottom: -10px; overflow: hidden; stroke: none; }
.er-label text { font-family: "Liberation Serif", serif; font-size: 9.500px; fill: #444; stroke: none; }
.er-text text { font-family: "Noto Sans CJK SC", sans-serif; font-size: 8.800px; fill: #444; stroke: none; letter-spacing: .4px; }
.cap { height: 12px; line-height: 12px; text-align: center; font-size: 9.200px; color: #333; margin-bottom: 1px; width: 538px; }
.cap.fig { margin-bottom: 0; }
.tcap { font-weight: 700; color: #3a3a3a; }
.second-cap { margin-top: 14px; }
.h-sec { height: 20px; line-height: 20px; margin: 4px 0 0 73px; font-size: 12.500px; font-weight: 400; color: #222; }
.para { margin: 4px 0 0 73px; width: 393px; font-size: 10.300px; color: #3a3a3a; }
.ln { height: 20.300px; line-height: 20.300px; text-align: justify; text-align-last: justify; overflow: hidden; }
.ln.last { text-align-last: left; }
.indent { padding-left: 21px; font-size: 10px; }
.ref { font-size: 4px; vertical-align: 2px; color: #777; }
.tbl {
  width: 385px; margin-left: 68px; table-layout: fixed; border-collapse: collapse;
  border: 1px solid #333; font-size: 9.500px; color: #333;
}
.tbl td { height: 13px; padding: 0; border: 1px solid #444; text-align: center; line-height: 12px; }
.c1 { width: 35px; }
.c2 { width: 91px; }
.c3 { width: 112px; }
.c4 { width: 108px; }
.c5 { width: 39px; }
.wavy { text-decoration: underline wavy #c0453b .5px; text-underline-offset: 1px; }

.vscroll {
  position: relative; display: flex; flex-direction: column; width: 15px; margin-top: -23px;
  box-sizing: border-box; padding-top: 5px; background: #e7eaf2; flex: none;
}
.sb-top { width: 11px; height: 11px; margin: 0 auto 4px; }
.sb-btn { height: 13px; background: #c6cad2; border-radius: 5px; font-size: 7px; line-height: 13px; text-align: center; color: #777; flex: none; }
.sb-rail { flex: 1; }
.sb-thumb { width: 14px; height: 33px; margin-top: 142px; border-radius: 5px; background: #dcdfe5; }
.sb-foot { display: flex; flex-direction: column; align-items: center; gap: 7px; height: 54px; padding-top: 4px; box-sizing: border-box; }
.sb-foot svg { width: 11px; height: 11px; }
.mouse { position: absolute; left: 5px; top: 229px; width: 10px; height: 14px; stroke: none; }

.side {
  display: flex; flex-direction: column; align-items: center; width: 39px; margin-top: -23px;
  box-sizing: border-box; padding: 11px 3px 0 0; background: #fff; flex: none;
}
.side-grip { width: 18px; height: 3px; margin-bottom: 17px; border-bottom: 1px solid #ccc; flex: none; }
.side-ic { width: 20px; height: 20px; margin-bottom: 13.600px; stroke: #444; }
.side-dots { font-family: "Liberation Sans", sans-serif; font-size: 10px; letter-spacing: 1px; line-height: 14px; margin-bottom: 10px; color: #555; }

.status {
  display: flex; align-items: center; height: 27px; box-sizing: border-box; padding-right: 10px;
  border-top: 1px solid #eceef1; font-size: 11.500px; color: #555; white-space: nowrap;
}
.st-text { color: #555; }
.page-no { margin-left: 9px; }
.words { margin-left: 1px; }
.st-sep { width: 1px; height: 18px; background: #eceef0; margin: 0 7px 0 5px; flex: none; }
.st-btn { display: flex; align-items: center; gap: 3px; height: 24px; }
.spell { margin-left: 7px; padding: 0 2px; background: #f0f4fb; }
.proof { margin-left: 14px; }
.missing { margin-left: 5px; }
.missing b { font-family: "Liberation Serif", serif; font-weight: 400; font-size: 15px; margin-right: 1px; }
.st-ic { width: 18px; height: 18px; margin: 0 3px; stroke: #444; flex: none; }
.eye { margin-right: 4px; }
.view-on { display: flex; align-items: center; justify-content: center; width: 22px; height: 26px; background: #e3e6ea; margin-right: 1px; }
.view-on .st-ic { margin: 0; width: 16px; }
.zoom-val { margin-left: 1px; color: #666; width: 40px; }
.zoom-btn { font-size: 16px; line-height: 20px; color: #333; font-weight: 700; width: 16px; text-align: center; }
.zoom-btn.plus { margin-left: 6px; }
.slider { position: relative; width: 129px; height: 1px; background: #d5d8dc; margin-left: 9px; flex: none; }
.slider i { position: absolute; left: 0; top: 0; width: 36px; height: 1px; background: #555; }
.slider b { position: absolute; left: 36px; top: -5px; width: 9px; height: 9px; border-radius: 50%; border: 1px solid #555; background: #fff; }
.full { margin-left: 7px; width: 16px; height: 16px; }

.taskbar {
  display: flex; align-items: center; margin-left: 4px; width: 1189px; height: 36px;
  background: linear-gradient(90deg, #1a2a3c, #1f2c3d 40%, #1e2834); color: #e6eaee; filter: blur(.3px);
}
.tb-cell { display: flex; align-items: center; justify-content: center; flex: none; width: 46px; }
.tb-cell svg { width: 17px; height: 17px; stroke: none; }
.tb-cell + .tb-cell svg { width: 24px; height: 24px; }
.tb-search { display: flex; width: 171px; height: 27px; margin-left: 1px; font-size: 9.500px; flex: none; }
.tb-input { display: flex; align-items: center; width: 127px; background: #eeeeee; color: #444; }
.ie { color: #1f8ae6; font: 700 22px/22px "Liberation Sans", sans-serif; margin: -3px 1px 0 5px; }
.tb-input em { color: #888; margin: 0 5px 0 1px; }
.tb-go { width: 44px; line-height: 27px; text-align: center; background: #1b82ef; color: #dfefff; }
.tb-sep { width: 1px; height: 25px; background: #3a4654; margin: 0 11px 0 8px; flex: none; }
.tb-app { position: relative; display: flex; align-items: center; justify-content: center; width: 46.500px; height: 36px; flex: none; }
.tb-app svg { width: 24px; height: 24px; stroke: none; }
.tb-app.active { background: #3c4857; }
.tb-app.run::after {
  content: ""; position: absolute; bottom: 0; left: 4px; right: 4px; height: 2px; background: #7db8e8;
}
.tb-app.active::after { left: 0; right: 0; }
.weather { position: relative; width: 149px; height: 36px; flex: none; font-size: 13px; color: #e8ecf0; }
.cloud { position: absolute; left: 67px; top: 8px; width: 24px; height: 20px; stroke: none; }
.weather span { position: absolute; line-height: 14px; white-space: nowrap; }
.w1 { left: 97px; top: 13px; }
.w2 { left: 135px; top: 13px; }
.w3 { left: 110px; top: 6px; font-size: 12px; }
.w4 { left: 99px; top: 19px; font-size: 12px; }
.tray-cell { display: flex; align-items: center; justify-content: center; width: 22.200px; flex: none; font-size: 13px; }
.tray-cell.q { margin-left: 4px; }
.tray-cell svg { width: 18px; height: 18px; stroke: none; }
.clock { width: 80px; margin-left: 2px; text-align: center; font-size: 12px; line-height: 16px; color: #e6eaee; flex: none; }
.action { width: 30px; flex: none; text-align: center; }
.action svg { width: 18px; height: 18px; display: block; margin: auto; stroke: none; }

.player { position: relative; height: 116px; background: #141414; color: #fff; }
.progress-row { display: flex; align-items: center; height: 32px; }
.time { font-family: "Open Sans", "Liberation Sans", sans-serif; font-size: 12px; letter-spacing: -.3px; }
.t-start { width: 77px; padding-left: 16px; box-sizing: border-box; }
.t-end { margin-left: 23px; }
.track { position: relative; width: 1044px; height: 4px; border-radius: 2px; background: #8f8f8f; flex: none; }
.done { height: 4px; border-radius: 2px; background: #ff8330; }
.knob {
  position: absolute; left: 892px; top: -8px; width: 20px; height: 20px; border-radius: 50%;
  background: #454545; display: flex; align-items: center; justify-content: center;
}
.knob i { width: 10px; height: 10px; border-radius: 50%; background: #ff8330; }
.control-row { display: flex; align-items: center; height: 84px; }
.title { width: 414px; box-sizing: border-box; padding-left: 15px; font-size: 19px; font-weight: 700; white-space: nowrap; font-family: "Liberation Sans", "Noto Sans CJK SC", sans-serif; flex: none; }
.dots { letter-spacing: 2px; margin-left: 2px; }
.controls { display: flex; align-items: center; margin-left: 36px; }
.controls .pc { width: 21px; height: 21px; margin-right: 23px; }
.controls .play { width: 52px; height: 52px; stroke: none; margin: 0 13px 0 0; }
.controls .rew { margin-right: 15px; }
.pc { width: 22px; height: 22px; stroke: #fff; stroke-width: 1.300; fill: none; flex: none; }
.pc text { font: 400 11px "Open Sans", sans-serif; fill: #fff; stroke: none; }
.pc .solid { fill: #fff; stroke: none; }
.pc .solid.dim { fill: #6a6a6a; }
.pc .dimline { stroke: #6a6a6a; }
.controls-right { display: flex; gap: 22.250px; position: absolute; left: 988px; top: 63px; }
.watermark {
  position: absolute; left: 984px; top: 86px; font-family: "Liberation Sans", sans-serif;
  font-size: 17px; line-height: 20px; letter-spacing: .4px; color: #8c8c8c; white-space: nowrap;
}
</style>
